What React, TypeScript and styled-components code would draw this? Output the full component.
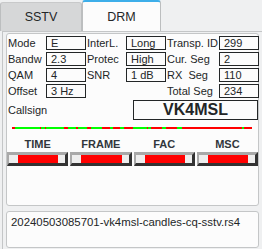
import styled, { createGlobalStyle } from 'styled-components'

const GlobalStyle = createGlobalStyle`
  body {
    margin: 0;
    background: #eff0f1;
    font-family: "Liberation Sans", Arial, sans-serif;
    font-size: 11px;
    color: #232627;
  }
`

const Window = styled.div`
  width: 262px;
  height: 249px;
  overflow: hidden;
`

const TabBar = styled.div`
  display: flex;
  height: 31px;
  align-items: flex-end;
`

const Tab = styled.div<{ active?: boolean }>`
  width: ${({ active }) => (active ? '79px' : '82px')};
  height: ${({ active }) => (active ? '31px' : '29px')};
  box-sizing: border-box;
  display: flex;
  align-items: center;
  justify-content: center;
  font-size: 12.5px;
  background: ${({ active }) => (active ? '#fcfcfc' : '#d6d7d8')};
  border: 1px solid #bcbebf;
  border-bottom: none;
  border-top: ${({ active }) => (active ? '2px solid #3daee9' : '1px solid #c8c9ca')};
  border-radius: 3px 3px 0 0;
`

const Pane = styled.div`
  margin-left: 2px;
  border-left: 1px solid #c4c6c7;
  border-top: 1px solid #c4c6c7;
  background: #eff0f1;
  padding: 1px 0 0 3px;
  height: 220px;
`

const GroupBox = styled.div`
  width: 253px;
  box-sizing: border-box;
  border: 1px solid #c4c6c7;
  border-radius: 3px;
  background: #fcfcfc;
  padding: 2px 0 0 0;
  height: 173px;
`

const InfoGrid = styled.div`
  display: grid;
  grid-template-columns: 39px 40px 40px 40px 53px 40px;
  grid-auto-rows: 14px;
  row-gap: 2px;
`

const Label = styled.div`
  padding-left: 1px;
  line-height: 14px;
  white-space: pre;
`

const Value = styled.div`
  border: 1px solid #232627;
  box-sizing: border-box;
  padding-left: 4px;
  line-height: 12px;
  background: #fcfcfc;
`

const CallsignRow = styled.div`
  display: flex;
  justify-content: space-between;
  align-items: center;
  margin-top: 2px;
`

const CallsignBox = styled.div`
  width: 125px;
  height: 20px;
  box-sizing: border-box;
  border: 1px solid #232627;
  display: flex;
  align-items: center;
  justify-content: center;
  font-weight: bold;
  font-size: 16px;
`

const Trace = styled.svg`
  display: block;
  margin: 7px 0 0 5px;
`

const StatusGrid = styled.div`
  display: grid;
  grid-template-columns: repeat(4, 1fr);
  column-gap: 2px;
  margin-top: 9px;
`

const StatusCell = styled.div`
  display: flex;
  flex-direction: column;
  align-items: center;
  gap: 2px;
`

const StatusName = styled.div`
  font-weight: bold;
  font-size: 11px;
  color: #31363b;
`

const Led = styled.div`
  width: 100%;
  height: 14px;
  box-sizing: border-box;
  border-style: solid;
  border-width: 3px 3px 3px 2px;
  border-color: #a9a9a9 #333 #333 #a9a9a9;
  background: #eeeeee;
  padding: 0 7px 0 9px;
`

const LedFill = styled.div<{ on: string }>`
  height: 100%;
  background: ${({ on }) => on};
`

const FileBox = styled.div`
  width: 253px;
  height: 37px;
  box-sizing: border-box;
  margin-top: 5px;
  border: 1px solid #c4c6c7;
  border-radius: 3px;
  background: #fcfcfc;
  padding: 4px 0 0 4px;
  font-size: 11.4px;
`

const rows: [string, string, string, string, string, string][] = [
  ['Mode', 'E', 'InterL.', 'Long', 'Transp. ID', '299'],
  ['Bandw', '2.3', 'Protec', 'High', 'Cur. Seg', '2'],
  ['QAM', '4', 'SNR', '1 dB', 'RX  Seg', '110'],
  ['Offset', '3 Hz', '', '', 'Total Seg', '234'],
]

// green stretches over the red line: [start, end] in px
const greens: [number, number][] = [
  [3, 28], [29, 33], [34, 52], [56, 64], [66, 75], [79, 90], [98, 101],
  [108, 112], [121, 135], [136, 139], [150, 154], [165, 170], [230, 232],
]

const statuses = ['TIME', 'FRAME', 'FAC', 'MSC']

export default function App() {
  return (
    <Window>
      <GlobalStyle />
      <TabBar>
        <Tab>SSTV</Tab>
        <Tab active>DRM</Tab>
      </TabBar>
      <Pane>
        <GroupBox>
          <InfoGrid>
            {rows.map((r) =>
              r.map((cell, i) =>
                i % 2 === 0 ? (
                  <Label key={r[0] + i}>{cell}</Label>
                ) : cell === '' ? (
                  <div key={r[0] + i} />
                ) : (
                  <Value key={r[0] + i}>{cell}</Value>
                ),
              ),
            )}
          </InfoGrid>
          <CallsignRow>
            <Label>Callsign</Label>
            <CallsignBox>VK4MSL</CallsignBox>
          </CallsignRow>
          <Trace width="240" height="2">
            <rect x="0" y="0" width="240" height="2" fill="#ff0000" />
            {greens.map(([a, b]) => (
              <rect key={a} x={a} y="0" width={b - a} height="2" fill="#00ff00" />
            ))}
          </Trace>
          <StatusGrid>
            {statuses.map((s) => (
              <StatusCell key={s}>
                <StatusName>{s}</StatusName>
                <Led>
                  <LedFill on="#ff0000" />
                </Led>
              </StatusCell>
            ))}
          </StatusGrid>
        </GroupBox>
        <FileBox>20240503085701-vk4msl-candles-cq-sstv.rs4</FileBox>
      </Pane>
    </Window>
  )
}
